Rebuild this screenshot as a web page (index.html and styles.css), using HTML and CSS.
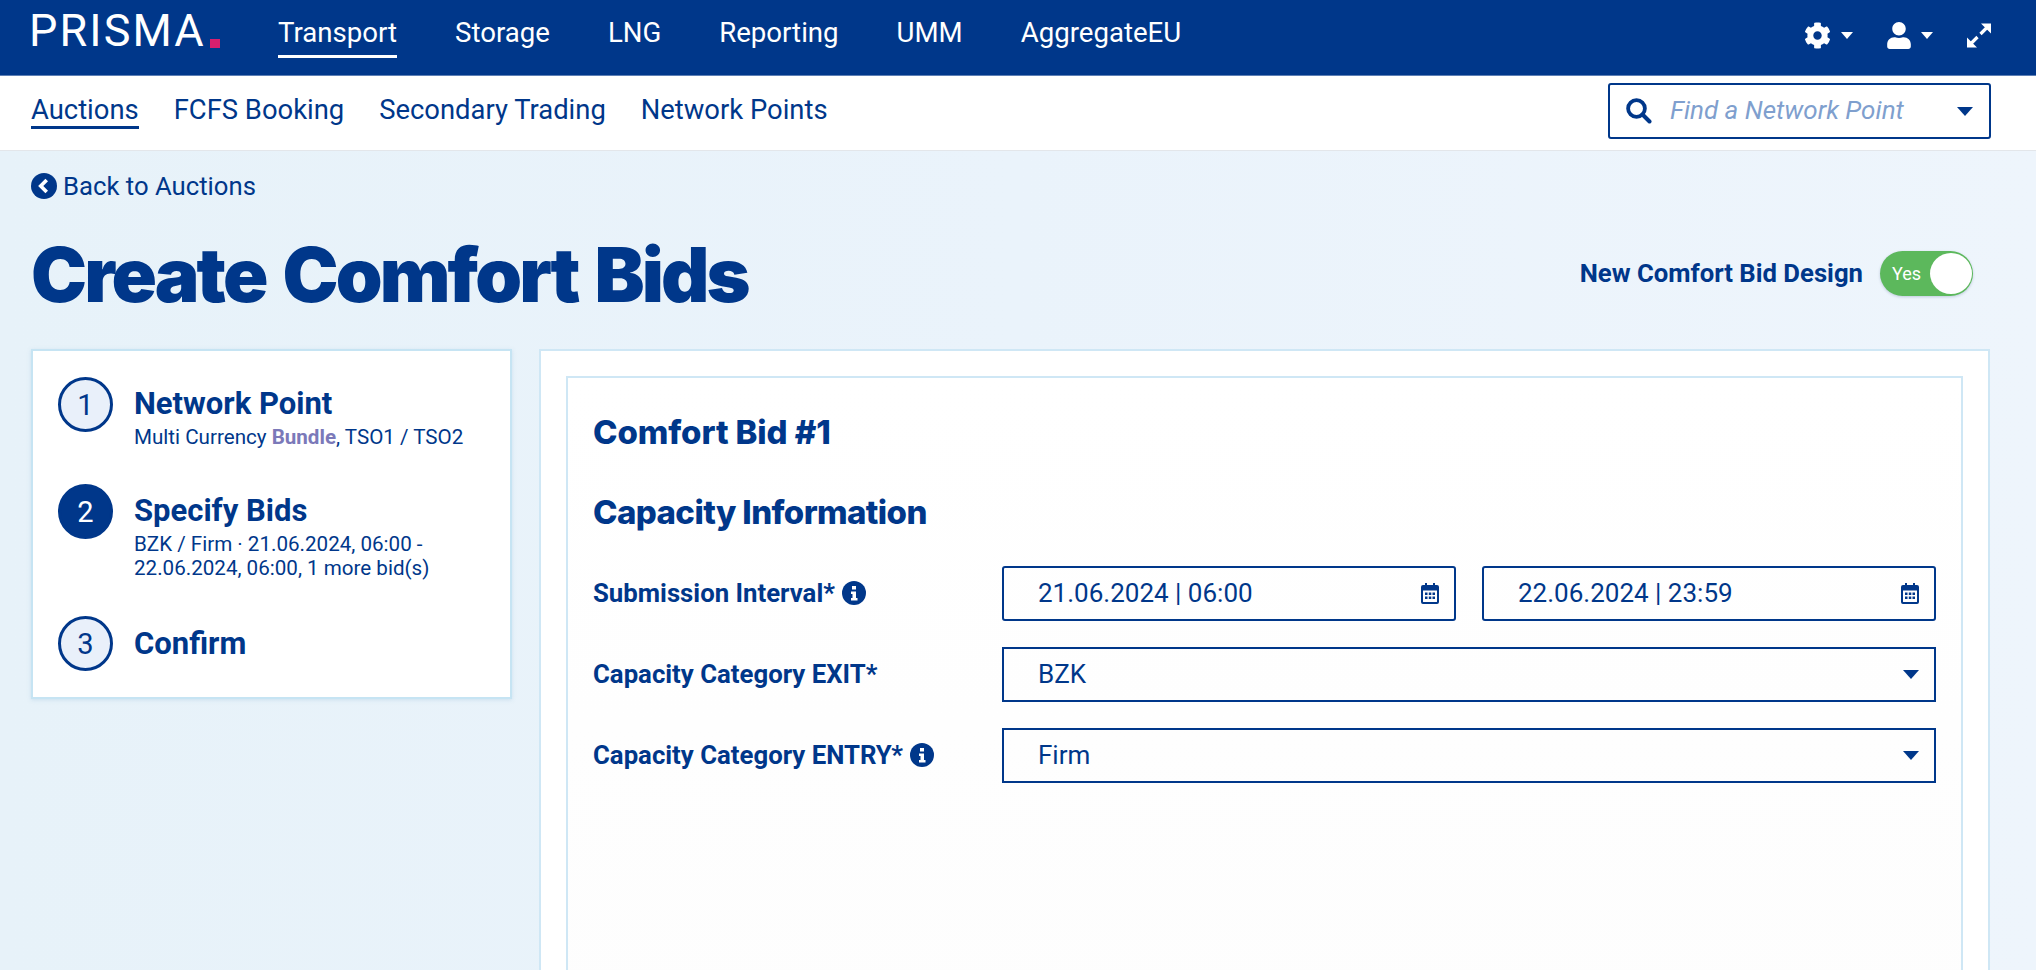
FILE: index.html
```html
<!DOCTYPE html>
<html lang="en">
<head>
<meta charset="utf-8">
<title>Create Comfort Bids</title>
<link rel="stylesheet" href="styles.css">
</head>
<body>
<header class="topbar">
  <div class="logo">PRISMA<span class="logo-dot"></span></div>
  <nav class="mainnav">
    <a class="mainnav-item is-active">Transport</a>
    <a class="mainnav-item">Storage</a>
    <a class="mainnav-item">LNG</a>
    <a class="mainnav-item">Reporting</a>
    <a class="mainnav-item">UMM</a>
    <a class="mainnav-item">AggregateEU</a>
  </nav>
  <div class="tools">
    <span class="tool">
      <svg class="ic-gear" viewBox="0 0 512 512"><path fill="#fff" d="M487.4 315.7l-42.6-24.6c4.3-23.2 4.3-47 0-70.2l42.6-24.6c4.9-2.8 7.1-8.6 5.5-14-11.1-35.6-30-67.8-54.7-94.6-3.8-4.1-10-5.1-14.8-2.3L380.8 110c-17.9-15.4-38.5-27.3-60.8-35.1V25.8c0-5.6-3.9-10.5-9.4-11.7-36.7-8.2-74.3-7.8-109.2 0-5.5 1.2-9.4 6.1-9.4 11.7V75c-22.2 7.9-42.8 19.8-60.8 35.1L88.7 85.5c-4.9-2.8-11-1.9-14.8 2.3-24.7 26.7-43.6 58.9-54.7 94.6-1.7 5.4.6 11.2 5.5 14L67.3 221c-4.3 23.2-4.3 47 0 70.2l-42.6 24.6c-4.9 2.8-7.1 8.6-5.5 14 11.1 35.6 30 67.8 54.7 94.6 3.8 4.1 10 5.1 14.8 2.3l42.6-24.6c17.9 15.4 38.5 27.3 60.8 35.1v49.2c0 5.6 3.9 10.5 9.4 11.7 36.7 8.2 74.3 7.8 109.2 0 5.5-1.2 9.4-6.1 9.4-11.7v-49.2c22.2-7.9 42.8-19.8 60.8-35.1l42.6 24.6c4.9 2.8 11 1.9 14.8-2.3 24.7-26.7 43.6-58.9 54.7-94.6 1.5-5.5-.7-11.3-5.6-14.1zM256 336c-44.1 0-80-35.9-80-80s35.9-80 80-80 80 35.9 80 80-35.9 80-80 80z"/></svg>
      <span class="caret caret-white"></span>
    </span>
    <span class="tool">
      <svg class="ic-user" viewBox="0 0 448 512"><path fill="#fff" d="M224 256c70.7 0 128-57.3 128-128S294.7 0 224 0 96 57.3 96 128s57.3 128 128 128zm89.6 32h-16.7c-22.2 10.2-46.9 16-72.9 16s-50.6-5.8-72.9-16h-16.7C60.2 288 0 348.2 0 422.4V464c0 26.5 21.5 48 48 48h352c26.5 0 48-21.5 48-48v-41.6c0-74.2-60.2-134.4-134.4-134.4z"/></svg>
      <span class="caret caret-white"></span>
    </span>
    <svg class="ic-expand" viewBox="0 0 24 24"><path fill="#fff" d="M14 0h10v10zM10 24H0V14z"/><path stroke="#fff" stroke-width="3.200" d="M20 4l-6.500 6.500M4 20l6.500-6.500"/></svg>
  </div>
</header>

<div class="subbar">
  <nav class="subnav">
    <a class="subnav-item is-active">Auctions</a>
    <a class="subnav-item">FCFS Booking</a>
    <a class="subnav-item">Secondary Trading</a>
    <a class="subnav-item">Network Points</a>
  </nav>
  <div class="finder">
    <svg class="ic-search" viewBox="0 0 26 26"><circle cx="10.500" cy="10.500" r="8.400" fill="none" stroke="#00378a" stroke-width="3.800"/><path d="M16.500 16.500l7 7" stroke="#00378a" stroke-width="4" stroke-linecap="round"/></svg>
    <span class="finder-text">Find a Network Point</span>
    <span class="caret caret-blue-lg"></span>
  </div>
</div>

<main class="page">
  <a class="back">
    <svg class="ic-back" viewBox="0 0 24 24"><circle cx="12" cy="12" r="12" fill="#00378a"/><path d="M14.500 6.500L9 12l5.500 5.500" fill="none" stroke="#fff" stroke-width="3.400"/></svg>
    <span>Back to Auctions</span>
  </a>
  <div class="title-row">
    <h1 class="title">Create Comfort Bids</h1>
    <div class="design-toggle">
      <span class="design-label">New Comfort Bid Design</span>
      <span class="switch"><span class="switch-text">Yes</span><span class="switch-knob"></span></span>
    </div>
  </div>

  <div class="columns">
    <aside class="steps">
      <div class="step step-one">
        <span class="step-num">1</span>
        <div class="step-body">
          <div class="step-title">Network Point</div>
          <div class="step-sub">Multi Currency <b class="bundle">Bundle</b>, TSO1 / TSO2</div>
        </div>
      </div>
      <div class="step step-two">
        <span class="step-num is-current">2</span>
        <div class="step-body">
          <div class="step-title">Specify Bids</div>
          <div class="step-sub">BZK / Firm · 21.06.2024, 06:00 -<br>22.06.2024, 06:00, 1 more bid(s)</div>
        </div>
      </div>
      <div class="step step-three">
        <span class="step-num">3</span>
        <div class="step-body step-body-center">
          <div class="step-title">Confirm</div>
        </div>
      </div>
    </aside>

    <section class="panel">
      <div class="bid">
        <h2 class="bid-title">Comfort Bid #1</h2>
        <h2 class="bid-section">Capacity Information</h2>
        <div class="form">
          <div class="field-label">Submission Interval*
            <svg class="ic-info" viewBox="0 0 24 24"><circle cx="12" cy="12" r="12" fill="#00378a"/><path fill="#fff" d="M10 5h4v3.500h-4zM9 10.500h5V17h1.500v2.500h-6.500V17h1.500v-4H9z"/></svg>
          </div>
          <div class="field-pair">
            <div class="input rounded"><span>21.06.2024 | 06:00</span>
              <svg class="ic-cal" viewBox="0 0 18 21"><path fill="#00378a" d="M4 0h2v2h6V0h2v2h2a2 2 0 0 1 2 2v15a2 2 0 0 1-2 2H2a2 2 0 0 1-2-2V4a2 2 0 0 1 2-2h2zM2 7.500V18.500a.5.5 0 0 0 .5.5h13a.5.5 0 0 0 .5-.5V7.500z"/><path fill="#00378a" d="M4 9.500h2.500V12H4zM7.800 9.500h2.500V12H7.800zM11.500 9.500H14V12h-2.500zM4 13.500h2.500V16H4zM7.800 13.500h2.500V16H7.800zM11.500 13.500H14V16h-2.500z"/></svg>
            </div>
            <div class="input rounded"><span>22.06.2024 | 23:59</span>
              <svg class="ic-cal" viewBox="0 0 18 21"><path fill="#00378a" d="M4 0h2v2h6V0h2v2h2a2 2 0 0 1 2 2v15a2 2 0 0 1-2 2H2a2 2 0 0 1-2-2V4a2 2 0 0 1 2-2h2zM2 7.500V18.500a.5.5 0 0 0 .5.5h13a.5.5 0 0 0 .5-.5V7.500z"/><path fill="#00378a" d="M4 9.500h2.500V12H4zM7.800 9.500h2.500V12H7.800zM11.500 9.500H14V12h-2.500zM4 13.500h2.500V16H4zM7.800 13.500h2.500V16H7.800zM11.500 13.500H14V16h-2.500z"/></svg>
            </div>
          </div>
          <div class="field-label">Capacity Category EXIT*</div>
          <div class="input"><span>BZK</span><span class="caret caret-blue"></span></div>
          <div class="field-label">Capacity Category ENTRY*
            <svg class="ic-info" viewBox="0 0 24 24"><circle cx="12" cy="12" r="12" fill="#00378a"/><path fill="#fff" d="M10 5h4v3.500h-4zM9 10.500h5V17h1.500v2.500h-6.500V17h1.500v-4H9z"/></svg>
          </div>
          <div class="input"><span>Firm</span><span class="caret caret-blue"></span></div>
        </div>
      </div>
    </section>
  </div>
</main>
</body>
</html>
```

FILE: styles.css
```css
* { box-sizing: border-box; }
html, body { margin: 0; height: 100%; }
body {
  height: 970px;
  overflow: hidden;
  font-family: Roboto, "Liberation Sans", sans-serif;
  color: #00378a;
  background: linear-gradient(90deg, #e7f2f9 0%, #eaf3fb 50%, #eef5fc 100%);
}

/* top bar */
.topbar {
  height: 76px;
  display: flex;
  align-items: flex-start;
  padding: 0 45px 0 29px;
  background: #00378a;
  border-bottom: 1px solid #5d7fb5;
  color: #fff;
}
.logo {
  display: flex;
  align-items: flex-end;
  width: 249px;
  padding-top: 5px;
  font-size: 45px;
  line-height: 52px;
  letter-spacing: 2.1px;
  font-weight: 400;
}
.logo-dot {
  width: 10px;
  height: 9px;
  margin: 0 0 9px 4px;
  background: #d81f6e;
}
.mainnav { display: flex; gap: 58px; }
.mainnav-item {
  display: block;
  height: 58px;
  padding-top: 16px;
  font-size: 27.6px;
  line-height: 34px;
}
.mainnav-item.is-active { border-bottom: 3px solid #fff; }
.tools {
  margin-left: auto;
  display: flex;
  align-items: center;
  gap: 34px;
  height: 70px;
}
.tool { display: flex; align-items: center; gap: 10px; }
.ic-gear { width: 27px; height: 27px; display: block; }
.ic-user { width: 24px; height: 27px; display: block; }
.ic-expand { width: 24px; height: 25px; display: block; }
.caret {
  display: block;
  width: 0;
  height: 0;
  border-style: solid;
  border-color: transparent;
  border-bottom-width: 0;
}
.caret-white {
  border-width: 7px 6.5px 0;
  border-top-color: #fff;
}
.caret-blue {
  border-width: 9px 8px 0;
  border-top-color: #00378a;
}
.caret-blue-lg {
  border-width: 9px 8px 0;
  border-top-color: #00378a;
}

/* sub bar */
.subbar {
  height: 75px;
  display: flex;
  align-items: flex-start;
  padding: 7px 45px 0 31px;
  background: #fff;
  border-bottom: 1px solid #e3e6ea;
}
.subnav { display: flex; gap: 35px; margin-top: 10px; }
.subnav-item {
  display: block;
  height: 36px;
  font-size: 27.4px;
  line-height: 34px;
}
.subnav-item.is-active { border-bottom: 3px solid #00378a; }
.finder {
  margin-left: auto;
  width: 383px;
  height: 56px;
  display: flex;
  align-items: center;
  padding: 0 16px;
  border: 2px solid #00378a;
  border-radius: 3px;
}
.ic-search { width: 26px; height: 26px; display: block; }
.finder-text {
  margin-left: 18px;
  margin-top: -2px;
  flex: 1;
  font-size: 26px;
  font-style: italic;
  color: #7f9fce;
}

/* page */
.page { padding: 0 46px 0 31px; }
.back {
  display: flex;
  align-items: center;
  gap: 6px;
  margin-top: 18px;
  height: 34px;
  font-size: 25.7px;
}
.ic-back { width: 26px; height: 26px; display: block; }
.title-row {
  display: flex;
  align-items: center;
  justify-content: space-between;
  height: 128px;
  margin-top: 10px;
}
.title {
  margin: -5px 0 0;
  font-family: Inter, Roboto, sans-serif;
  font-weight: 900;
  font-size: 75px;
  line-height: 80px;
  letter-spacing: -2.9px;
  word-spacing: 5px;
}
.design-toggle {
  display: flex;
  align-items: center;
  gap: 17px;
  margin-right: 17px;
  margin-top: -8px;
}
.design-label { font-size: 25.7px; font-weight: 700; }
.switch {
  position: relative;
  width: 93px;
  height: 45px;
  display: flex;
  align-items: center;
  padding-left: 12px;
  border-radius: 23px;
  background: #5cb85c;
  color: #fff;
  font-size: 18px;
  box-shadow: 0 1px 3px rgba(0, 40, 100, .2);
}
.switch-knob {
  position: absolute;
  right: 1px;
  top: 2px;
  width: 42px;
  height: 41px;
  border-radius: 50%;
  background: #fff;
}

.columns {
  display: grid;
  grid-template-columns: 481px 1fr;
  gap: 27px;
  align-items: start;
  margin-top: 8px;
}
.steps {
  height: 350px;
  padding: 26px 0 0 25px;
  background: #fff;
  border: 2px solid #c6e4f3;
  box-shadow: 0 1px 4px rgba(120, 170, 210, .25);
}
.step { display: flex; gap: 21px; }
.step-one { height: 107px; }
.step-two { height: 132px; }
.step-three { height: 55px; }
.step-num {
  flex: none;
  width: 55px;
  height: 55px;
  display: flex;
  align-items: center;
  justify-content: center;
  border: 3px solid #00378a;
  border-radius: 50%;
  background: #e9f0fa;
  font-size: 29px;
}
.step-num.is-current { background: #00378a; color: #fff; }
.step-title {
  font-size: 31px;
  line-height: 37px;
  font-weight: 700;
  margin-top: 8px;
}
.step-body-center .step-title { margin-top: 9px; }
.step-sub { font-size: 20.6px; line-height: 24px; margin-top: 3px; }
.bundle { color: #7b79b9; font-weight: 700; }

.panel {
  height: 700px;
  padding: 25px 25px 0;
  background: #fff;
  border: 2px solid #cfe7f5;
}
.bid {
  height: 700px;
  padding: 0 25px;
  background: linear-gradient(180deg, #fff, #fdfdfd);
  border: 2px solid #cfe7f5;
}
.bid-title, .bid-section {
  margin: 0;
  font-family: Inter, Roboto, sans-serif;
  font-weight: 800;
  font-size: 33px;
  line-height: 40px;
}
.bid-title { padding-top: 34px; height: 74px; letter-spacing: -.1px; }
.bid-section { margin-top: 32px; height: 82px; padding-top: 8px; letter-spacing: -.6px; }
.form {
  display: grid;
  grid-template-columns: 409px 1fr;
  row-gap: 26px;
  align-items: center;
}
.field-label {
  display: flex;
  align-items: center;
  gap: 7px;
  margin-top: -2px;
  font-size: 25.75px;
  font-weight: 700;
  white-space: nowrap;
}
.ic-info { width: 24px; height: 24px; display: block; }
.field-pair { display: grid; grid-template-columns: 1fr 1fr; gap: 26px; }
.input {
  height: 55px;
  display: flex;
  align-items: center;
  justify-content: space-between;
  padding: 0 15px 0 34px;
  border: 2px solid #00378a;
  font-size: 26px;
}
.input > span:first-child { margin-top: -2px; }
.input.rounded { border-radius: 3px; }
.ic-cal { width: 18px; height: 21px; display: block; }
```
